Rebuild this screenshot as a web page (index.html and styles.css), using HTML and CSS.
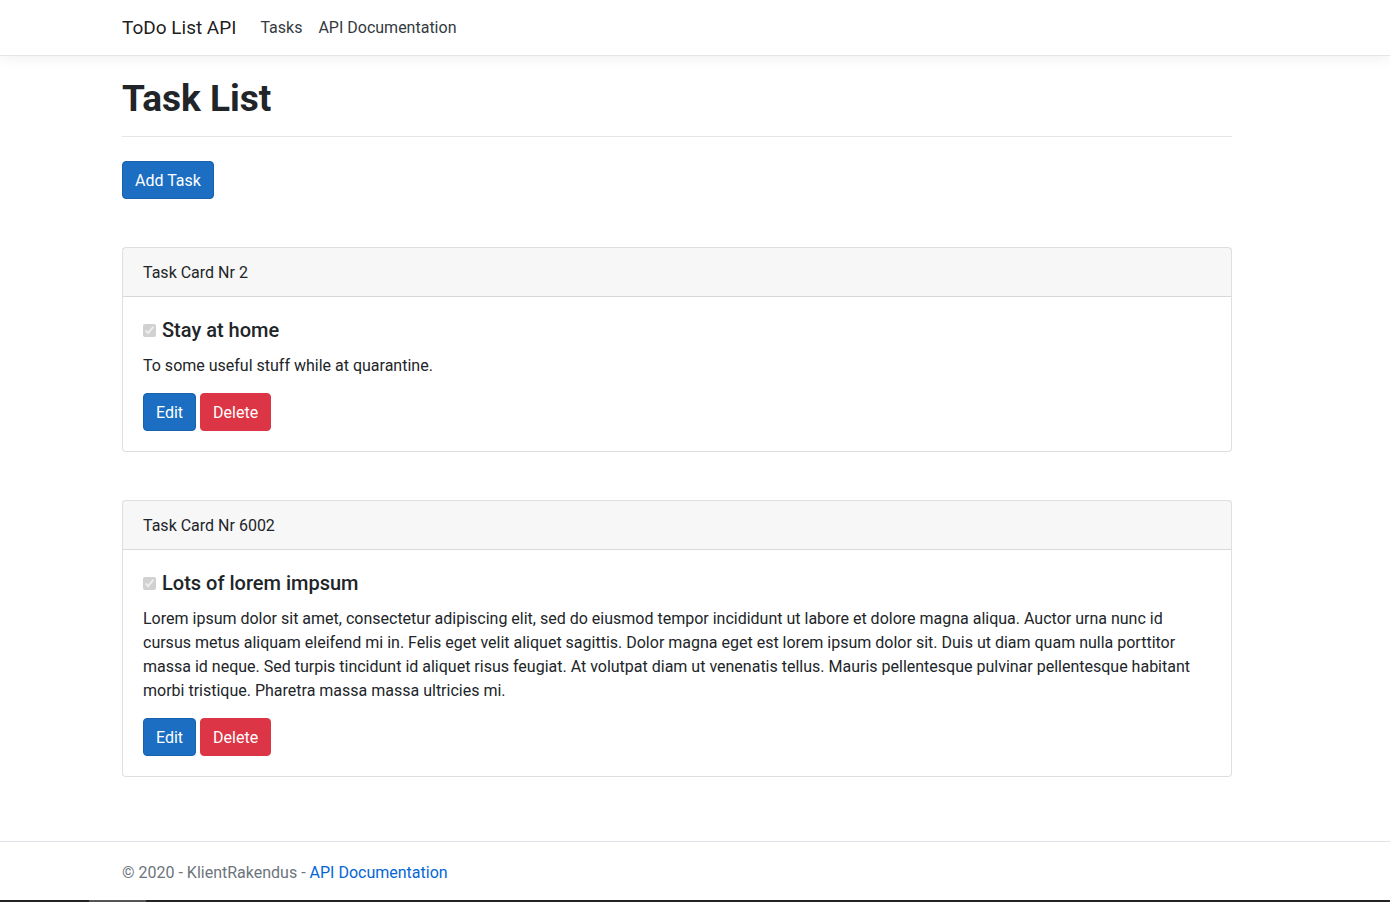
FILE: index.html
```html
<!DOCTYPE html>
<html lang="en">
<head>
<meta charset="utf-8">
<title>Task List - ToDo List API</title>
<link rel="stylesheet" href="styles.css">
</head>
<body>
<header class="navbar">
  <div class="container nav-inner">
    <a class="brand" href="#">ToDo List API</a>
    <nav class="nav-links">
      <a class="nav-link" href="#">Tasks</a>
      <a class="nav-link" href="#">API Documentation</a>
    </nav>
  </div>
</header>

<main class="container main">
  <h1 class="page-title">Task List</h1>
  <hr class="rule">
  <div class="toolbar">
    <button class="btn btn-primary">Add Task</button>
  </div>

  <section class="card">
    <div class="card-header">Task Card Nr 2</div>
    <div class="card-body">
      <h5 class="card-title"><input type="checkbox" class="done" checked disabled>Stay at home</h5>
      <p class="card-text">To some useful stuff while at quarantine.</p>
      <div class="actions">
        <button class="btn btn-primary">Edit</button>
        <button class="btn btn-danger">Delete</button>
      </div>
    </div>
  </section>

  <section class="card">
    <div class="card-header">Task Card Nr 6002</div>
    <div class="card-body">
      <h5 class="card-title"><input type="checkbox" class="done" checked disabled>Lots of lorem impsum</h5>
      <p class="card-text">Lorem ipsum dolor sit amet, consectetur adipiscing elit, sed do eiusmod tempor incididunt ut labore et dolore magna aliqua. Auctor urna nunc id cursus metus aliquam eleifend mi in. Felis eget velit aliquet sagittis. Dolor magna eget est lorem ipsum dolor sit. Duis ut diam quam nulla porttitor massa id neque. Sed turpis tincidunt id aliquet risus feugiat. At volutpat diam ut venenatis tellus. Mauris pellentesque pulvinar pellentesque habitant morbi tristique. Pharetra massa massa ultricies mi.</p>
      <div class="actions">
        <button class="btn btn-primary">Edit</button>
        <button class="btn btn-danger">Delete</button>
      </div>
    </div>
  </section>
</main>

<footer class="footer">
  <div class="container">&copy; 2020 - KlientRakendus - <a class="footer-link" href="#">API Documentation</a></div>
</footer>
<div class="taskbar"><span class="taskbar-tab"></span></div>
</body>
</html>
```
FILE: styles.css
```css
* { box-sizing: border-box; }
html, body { margin: 0; padding: 0; }
body {
  font-family: Roboto, "Liberation Sans", sans-serif;
  font-size: 16px;
  line-height: 1.5;
  color: #212529;
  background: #fff;
  min-height: 902px;
  display: flex;
  flex-direction: column;
}
a { text-decoration: none; }

.container {
  width: 1110px;
  margin-left: 122px;
}

.navbar {
  height: 56px;
  background: #fff;
  border-bottom: 1px solid #e5e5e5;
  box-shadow: 0 4px 12px rgba(0,0,0,.05);
  display: flex;
  align-items: center;
}
.nav-inner { display: flex; align-items: center; }
.brand {
  font-size: 19px;
  line-height: 30px;
  color: rgba(0,0,0,.9);
  margin-right: 16px;
}
.nav-links { display: flex; }
.nav-link {
  color: #343a40;
  padding: 8px;
  font-size: 16px;
}

.main { padding-top: 16px; flex: 1; }
.page-title {
  font-size: 37px;
  font-weight: 700;
  line-height: 48px;
  margin: 0;
  padding-top: 3px;
  color: #212529;
}
.rule {
  border: 0;
  border-top: 1px solid rgba(0,0,0,.1);
  margin: 13px 0 24px;
}
.toolbar { margin-bottom: 48px; }

.btn {
  font-family: inherit;
  font-size: 16px;
  line-height: 24px;
  padding: 7px 12px 5px;
  border: 1px solid transparent;
  border-radius: 4px;
  color: #fff;
  cursor: pointer;
}
.btn-primary { background: #1b6ec2; border-color: #1861ac; }
.btn-danger { background: #dc3545; border-color: #dc3545; }

.card {
  border: 1px solid rgba(0,0,0,.125);
  border-radius: 4px;
  margin-bottom: 48px;
  background: #fff;
}
.card:last-child { margin-bottom: 64px; }
.card-header {
  padding: 13px 20px 11px;
  background: rgba(0,0,0,.03);
  border-bottom: 1px solid rgba(0,0,0,.125);
  line-height: 24px;
}
.card-body { padding: 21px 20px 20px; }
.card-title {
  font-size: 20px;
  font-weight: 500;
  line-height: 24px;
  margin: 0 0 12px;
  display: flex;
  align-items: center;
}
.done {
  width: 13px;
  height: 13px;
  margin: 0 6px 0 0;
}
.card-text { margin: 0 0 15px; }
.actions { display: flex; gap: 4px; }

.footer {
  border-top: 1px solid #dee2e6;
  line-height: 59px;
  padding-top: 1px;
  color: #6c757d;
  white-space: nowrap;
}
.footer-link { color: #0366d6; }

.taskbar {
  position: fixed;
  left: 0; right: 0; bottom: 0;
  height: 2px;
  background: #232323;
}
.taskbar-tab {
  position: absolute;
  left: 89px;
  width: 57px;
  top: 0; bottom: 0;
  background: #555;
}
```
